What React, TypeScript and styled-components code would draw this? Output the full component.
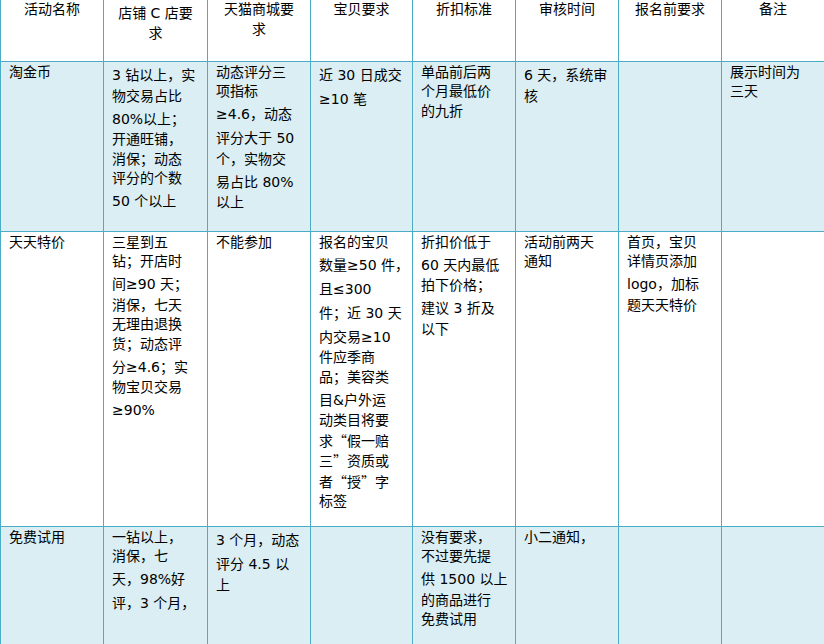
import React from "react";
import styled, { createGlobalStyle } from "styled-components";

const GlobalStyle = createGlobalStyle`
  html, body {
    margin: 0;
    padding: 0;
    background: #ffffff;
    overflow: hidden;
  }
`;

const LINE = "#4bacc6";
const SHADE = "#daeef3";

const Page = styled.div`
  width: 824px;
  height: 644px;
  overflow: hidden;
  background: #ffffff;
  font-family: "DejaVu Sans", "Noto Sans CJK SC", sans-serif;
  font-size: 14px;
  color: #000000;
`;

const Table = styled.div`
  display: grid;
  grid-template-columns: 103px 104px 103px 102px 103px 103px 103px 103px;
  grid-template-rows: 62px 170px 295px 140px;
  width: max-content;
`;

const Cell = styled.div<{ $shade?: boolean; $head?: boolean }>`
  box-sizing: border-box;
  border-left: 1px solid ${LINE};
  border-bottom: 1px solid ${LINE};
  background: ${(p) => (p.$shade ? SHADE : "#ffffff")};
  padding: ${(p) => (p.$head ? "0 2px" : "0.5px 4px 0 8px")};
  text-align: ${(p) => (p.$head ? "center" : "left")};
  overflow: hidden;
`;

const Line = styled.div<{ $latin: boolean }>`
  white-space: nowrap;
  line-height: 19.5px;
  padding: ${(p) => (p.$latin ? "3.5px 0 1px" : "0")};
`;

// full-width CJK quotes, as the source document sets them
const Quote = styled.span`
  font-family: "Noto Sans CJK SC", sans-serif;
`;

type Row = { head?: boolean; shade?: boolean; cells: string[][] };

const rows: Row[] = [
  {
    head: true,
    cells: [
      ["活动名称"],
      ["店铺 C 店要", "求"],
      ["天猫商城要", "求"],
      ["宝贝要求"],
      ["折扣标准"],
      ["审核时间"],
      ["报名前要求"],
      ["备注"],
    ],
  },
  {
    shade: true,
    cells: [
      ["淘金币"],
      ["3 钻以上，实", "物交易占比", "80%以上；", "开通旺铺，", "消保；动态", "评分的个数", "50 个以上"],
      ["动态评分三", "项指标", "≥4.6，动态", "评分大于 50", "个，实物交", "易占比 80%", "以上"],
      ["近 30 日成交", "≥10 笔"],
      ["单品前后两", "个月最低价", "的九折"],
      ["6 天，系统审", "核"],
      [],
      ["展示时间为", "三天"],
    ],
  },
  {
    cells: [
      ["天天特价"],
      ["三星到五", "钻；开店时", "间≥90 天；", "消保，七天", "无理由退换", "货；动态评", "分≥4.6；实", "物宝贝交易", "≥90%"],
      ["不能参加"],
      [
        "报名的宝贝",
        "数量≥50 件，",
        "且≤300",
        "件；近 30 天",
        "内交易≥10",
        "件应季商",
        "品；美容类",
        "目&户外运",
        "动类目将要",
        "求“假一赔",
        "三”资质或",
        "者“授”字",
        "标签",
      ],
      ["折扣价低于", "60 天内最低", "拍下价格；", "建议 3 折及", "以下"],
      ["活动前两天", "通知"],
      ["首页，宝贝", "详情页添加", "logo，加标", "题天天特价"],
      [],
    ],
  },
  {
    shade: true,
    cells: [
      ["免费试用"],
      ["一钻以上，", "消保，七", "天，98%好", "评，3 个月，"],
      ["3 个月，动态", "评分 4.5 以", "上"],
      [],
      ["没有要求，", "不过要先提", "供 1500 以上", "的商品进行", "免费试用"],
      ["小二通知，"],
      [],
      [],
    ],
  },
];

const isLatin = (s: string) => /[A-Za-z0-9&%.]/.test(s);

const renderText = (s: string) =>
  s.split(/([“”])/).map((part, i) =>
    part === "“" || part === "”" ? <Quote key={i}>{part}</Quote> : part
  );

const App: React.FC = () => {
  return (
    <>
      <GlobalStyle />
      <Page>
        <Table>
          {rows.map((row, r) =>
            row.cells.map((lines, c) => (
              <Cell key={`${r}-${c}`} $shade={row.shade} $head={row.head}>
                {lines.map((text, i) => (
                  <Line key={i} $latin={isLatin(text)}>
                    {renderText(text)}
                  </Line>
                ))}
              </Cell>
            ))
          )}
        </Table>
      </Page>
    </>
  );
};

export default App;
